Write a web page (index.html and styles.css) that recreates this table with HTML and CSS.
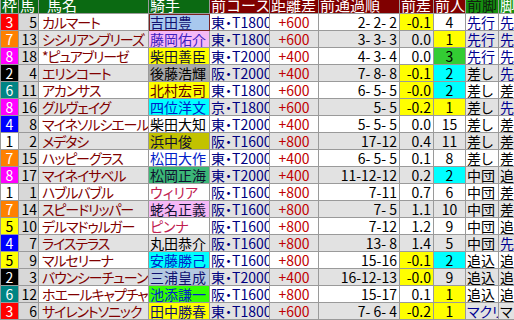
FILE: index.html
```html
<!DOCTYPE html>
<html lang="ja">
<head>
<meta charset="utf-8">
<title>出走表</title>
<link rel="stylesheet" href="styles.css">
</head>
<body>
<table class="race">
<colgroup>
<col class="c-waku"><col class="c-uma"><col class="c-name"><col class="c-jockey"><col class="c-course"><col class="c-dist"><col class="c-pass"><col class="c-diff"><col class="c-pop"><col class="c-leg"><col class="c-leg2">
</colgroup>
<thead>
<tr>
<th class="hg">枠</th><th class="hg">馬</th><th class="hg h-name">馬名</th><th class="hg">騎手</th><th class="hr">前コース</th><th class="hr">距離差</th><th class="hr">前通過順</th><th class="hr">前差</th><th class="hr">前人</th><th class="hl h-dark">前脚</th><th class="hl">脚</th>
</tr>
</thead>
<tbody>
<tr><td class="w w3">3</td><td class="n">5</td><td class="nm">カルマート</td><td class="j j-sel jb-lblue jt-navy">吉田豊</td><td class="cs">東・T1800</td><td class="ds">+600</td><td class="ps">2- 2- 2</td><td class="df y">-0.1</td><td class="pp">4</td><td class="lg blue">先行</td><td class="lg2 blue">先</td></tr>
<tr><td class="w w7">7</td><td class="n">13</td><td class="nm">シシリアンブリーズ</td><td class="j jb-pink jt-violet">藤岡佑介</td><td class="cs">東・T1800</td><td class="ds">+600</td><td class="ps">3- 3- 3</td><td class="df">0.0</td><td class="pp y">1</td><td class="lg blue">先行</td><td class="lg2 blue">先</td></tr>
<tr><td class="w w8">8</td><td class="n">18</td><td class="nm">*ピュアブリーゼ</td><td class="j jb-yellow jt-ink">柴田善臣</td><td class="cs">東・T2000</td><td class="ds">+400</td><td class="ps">4- 3- 4</td><td class="df">0.0</td><td class="pp g">3</td><td class="lg blue">先行</td><td class="lg2 blue">先</td></tr>
<tr><td class="w w2">2</td><td class="n">4</td><td class="nm">エリンコート</td><td class="j jb-gray">後藤浩輝</td><td class="cs">阪・T2000</td><td class="ds">+400</td><td class="ps">7- 8- 8</td><td class="df y">-0.1</td><td class="pp c">2</td><td class="lg">差し</td><td class="lg2 blue">先</td></tr>
<tr><td class="w w6">6</td><td class="n">11</td><td class="nm">アカンサス</td><td class="j jb-yellow jt-maroon">北村宏司</td><td class="cs">東・T1800</td><td class="ds">+600</td><td class="ps">6- 5- 5</td><td class="df y">-0.0</td><td class="pp c">2</td><td class="lg">差し</td><td class="lg2">差</td></tr>
<tr><td class="w w8">8</td><td class="n">16</td><td class="nm">グルヴェイグ</td><td class="j jb-cyan jt-blue">四位洋文</td><td class="cs">京・T1800</td><td class="ds">+600</td><td class="ps">5- 5</td><td class="df y">-0.2</td><td class="pp y">1</td><td class="lg">差し</td><td class="lg2 blue">先</td></tr>
<tr><td class="w w4">4</td><td class="n">8</td><td class="nm">マイネソルシエール</td><td class="j">柴田大知</td><td class="cs">東・T2000</td><td class="ds">+400</td><td class="ps">5- 5- 5</td><td class="df">0.0</td><td class="pp">15</td><td class="lg">差し</td><td class="lg2">差</td></tr>
<tr><td class="w w1">1</td><td class="n">2</td><td class="nm">メデタシ</td><td class="j jb-olive jt-ink">浜中俊</td><td class="cs">阪・T1600</td><td class="ds">+800</td><td class="ps">17-12</td><td class="df">0.4</td><td class="pp">11</td><td class="lg">差し</td><td class="lg2">差</td></tr>
<tr><td class="w w7">7</td><td class="n">15</td><td class="nm">ハッピーグラス</td><td class="j jt-blue">松田大作</td><td class="cs">東・T2000</td><td class="ds">+400</td><td class="ps">6- 5- 5</td><td class="df">0.1</td><td class="pp">8</td><td class="lg">差し</td><td class="lg2">差</td></tr>
<tr><td class="w w8">8</td><td class="n">17</td><td class="nm">マイネイサベル</td><td class="j jb-sea jt-ink">松岡正海</td><td class="cs">東・T2000</td><td class="ds">+400</td><td class="ps">11-12-12</td><td class="df">0.2</td><td class="pp c">2</td><td class="lg">中団</td><td class="lg2">追</td></tr>
<tr><td class="w w1">1</td><td class="n">1</td><td class="nm">ハブルバブル</td><td class="j jt-rose">ウィリア</td><td class="cs">阪・T1600</td><td class="ds">+800</td><td class="ps">7-11</td><td class="df">0.7</td><td class="pp">6</td><td class="lg">中団</td><td class="lg2">差</td></tr>
<tr><td class="w w7">7</td><td class="n">14</td><td class="nm">スピードリッパー</td><td class="j jb-pink jt-ink">蛯名正義</td><td class="cs">阪・T1600</td><td class="ds">+800</td><td class="ps">7- 5</td><td class="df">1.1</td><td class="pp">10</td><td class="lg">中団</td><td class="lg2">差</td></tr>
<tr><td class="w w5">5</td><td class="n">10</td><td class="nm">デルマドゥルガー</td><td class="j jt-rose">ピンナ</td><td class="cs">阪・T1600</td><td class="ds">+800</td><td class="ps">7-12</td><td class="df">1.2</td><td class="pp">9</td><td class="lg">中団</td><td class="lg2">追</td></tr>
<tr><td class="w w4">4</td><td class="n">7</td><td class="nm">ライステラス</td><td class="j">丸田恭介</td><td class="cs">阪・T1600</td><td class="ds">+800</td><td class="ps">13- 8</td><td class="df">1.4</td><td class="pp">5</td><td class="lg">中団</td><td class="lg2 blue">先</td></tr>
<tr><td class="w w5">5</td><td class="n">9</td><td class="nm">マルセリーナ</td><td class="j jb-cyan jt-blue">安藤勝己</td><td class="cs">阪・T1600</td><td class="ds">+800</td><td class="ps">15-16</td><td class="df y">-0.1</td><td class="pp c">2</td><td class="lg">追込</td><td class="lg2">追</td></tr>
<tr><td class="w w2">2</td><td class="n">3</td><td class="nm">バウンシーチューン</td><td class="j jb-steel jt-navy">三浦皇成</td><td class="cs">東・T2000</td><td class="ds">+400</td><td class="ps">16-12-13</td><td class="df y">-0.0</td><td class="pp">9</td><td class="lg">追込</td><td class="lg2">追</td></tr>
<tr><td class="w w6">6</td><td class="n">12</td><td class="nm">ホエールキャプチャ</td><td class="j jb-lime jt-blue">池添謙一</td><td class="cs">阪・T1600</td><td class="ds">+800</td><td class="ps">15-17</td><td class="df">0.1</td><td class="pp y">1</td><td class="lg">追込</td><td class="lg2">追</td></tr>
<tr><td class="w w3">3</td><td class="n">6</td><td class="nm">サイレントソニック</td><td class="j jb-yellow jt-navy">田中勝春</td><td class="cs">東・T1800</td><td class="ds">+600</td><td class="ps">7- 6- 4</td><td class="df y">-0.2</td><td class="pp y">1</td><td class="lg blue">マクリ</td><td class="lg2">マ</td></tr>
</tbody>
</table>
</body>
</html>
```

FILE: styles.css
```css
html, body {
  margin: 0;
  padding: 0;
  background: #ffffff;
  overflow: hidden;
}

body {
  width: 514px;
  height: 320px;
  font-family: "Noto Sans CJK JP", "Noto Sans", sans-serif;
}

.race {
  border-collapse: collapse;
  table-layout: fixed;
  width: 530px;
  margin-top: -4px;
  font-size: 14px;
  line-height: 16px;
}

.c-waku { width: 18px; }
.c-uma { width: 20px; }
.c-name { width: 110px; }
.c-jockey { width: 61px; }
.c-course { width: 60px; }
.c-dist { width: 49px; }
.c-pass { width: 81px; }
.c-diff { width: 34px; }
.c-pop { width: 32px; }
.c-leg { width: 33px; }
.c-leg2 { width: 32px; }

.race th,
.race td {
  border: 1px solid #9a9a9a;
  padding: 0;
  white-space: pre;
  overflow: hidden;
}

.race td {
  font-feature-settings: "palt" 1;
}

.race th {
  height: 16px;
  font-size: 15px;
  font-weight: normal;
  color: #ffffff;
  text-align: left;
  padding-left: 1px;
  line-height: 16px;
}

.hg { background: #0b6a12; }
.hr { background: #800000; }
.hl { background: #15900f; }
.race th.h-dark { color: #102010; }
.race th.h-name { padding-left: 8px; }

.race td {
  height: 16px;
  color: #000000;
}

.race tbody tr:nth-child(even) { background: #e2e2e2; }
.race tbody tr:nth-child(odd) { background: #ffffff; }

/* waku */
.race td.w { text-align: center; color: #ffffff; }
.race td.w1 { background: #ffffff; color: #000000; }
.race td.w2 { background: #000000; }
.race td.w3 { background: #ff0000; }
.race td.w4 { background: #0000ff; }
.race td.w5 { background: #ffff00; color: #000000; }
.race td.w6 { background: #008484; }
.race td.w7 { background: #ff8000; }
.race td.w8 { background: #ff00ff; }

.race td.n { background: #d8d8d8; text-align: right; padding-right: 1px; }

.race td.nm {
  color: #800000;
  padding-left: 3px;
  font-size: 14px;
  letter-spacing: -1.1px;
}

.race td.j { padding-left: 1px; }
.race td.j-sel { outline: 1px solid #7a2020; outline-offset: -1px; }
.race td.jb-lblue { background: #a8c8ee; }
.race td.jb-pink { background: #f6b8f6; }
.race td.jb-yellow { background: #ffff00; }
.race td.jb-gray { background: #a8a8a8; }
.race td.jb-cyan { background: #00ffff; }
.race td.jb-olive { background: #c2c200; }
.race td.jb-sea { background: #3cb878; }
.race td.jb-steel { background: #b4c8e0; }
.race td.jb-lime { background: #33ff00; }
.race td.jt-navy { color: #101070; }
.race td.jt-violet { color: #4020c0; }
.race td.jt-ink { color: #101030; }
.race td.jt-maroon { color: #600000; }
.race td.jt-blue { color: #0020c8; }
.race td.jt-rose { color: #c02050; }

.race td.cs { color: #000080; padding-left: 1px; }
.race td.ds { color: #c00000; text-align: center; }
.race td.ps { text-align: right; padding-right: 2px; }
.race td.df { text-align: right; padding-right: 2px; }
.race td.pp { text-align: center; }
.race td.lg { padding-left: 1px; }
.race td.lg2 { padding-left: 1px; }
.race td.blue { color: #000090; }

.race td.y { background: #ffff00; }
.race td.c { background: #00ffff; }
.race td.g { background: #33cc33; }
```
